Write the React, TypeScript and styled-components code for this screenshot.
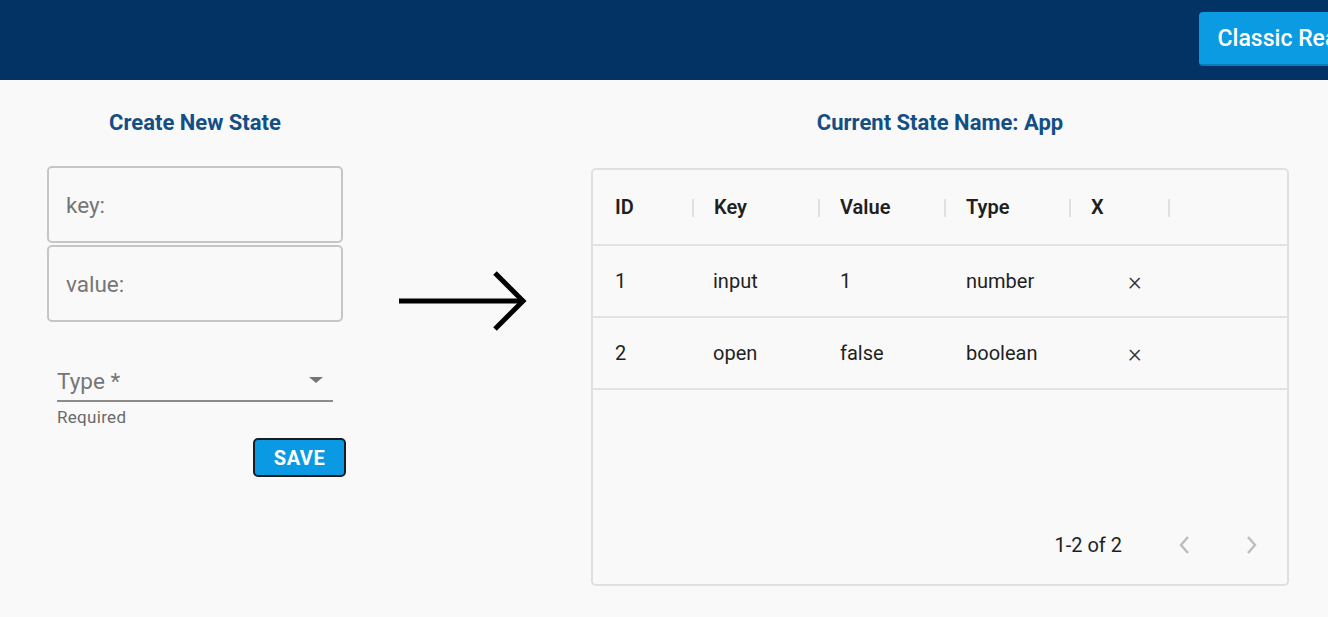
import React from 'react';
import styled, { createGlobalStyle } from 'styled-components';

const GlobalStyle = createGlobalStyle`
  html, body {
    margin: 0;
    padding: 0;
    background: #f9f9f9;
    font-family: Roboto, "Liberation Sans", Arial, sans-serif;
    overflow: hidden;
  }
`;

const Page = styled.div`
  width: 1328px;
  height: 617px;
  background: #f9f9f9;
  overflow: hidden;
`;

const TopBar = styled.header`
  height: 80px;
  background: #023364;
  display: flex;
  align-items: flex-start;
  justify-content: flex-end;
  padding-top: 12px;
  box-sizing: border-box;
  overflow: hidden;
`;

const NavButton = styled.button`
  height: 54px;
  margin-right: -48px;
  padding: 0 19px;
  border: none;
  border-bottom: 2px solid #0b7bc0;
  border-radius: 4px;
  background: #0a9be3;
  color: #fff;
  font-family: Roboto, "Liberation Sans", sans-serif;
  font-size: 23px;
  font-weight: 500;
  white-space: nowrap;
`;

const Main = styled.main`
  display: flex;
  padding: 29px 0 0 47px;
`;

const Column = styled.section<{ $width: number }>`
  width: ${(p) => p.$width}px;
  display: flex;
  flex-direction: column;
`;

const Title = styled.h2`
  margin: 0;
  height: 28px;
  line-height: 28px;
  text-align: center;
  color: #124f86;
  font-size: 22px;
  font-weight: 700;
`;

const TextBox = styled.input`
  box-sizing: border-box;
  width: 296px;
  height: 77px;
  margin: 0;
  padding: 0 17px;
  border: 2px solid #c6c6c6;
  border-radius: 5px;
  background: transparent;
  font-family: Roboto, "Liberation Sans", sans-serif;
  font-size: 22.5px;
  color: #333;
  outline: none;

  &::placeholder {
    color: #767676;
  }
`;

const Fields = styled.div`
  display: flex;
  flex-direction: column;
  gap: 2px;
  margin-top: 29px;
`;

const SelectField = styled.div`
  margin: 42px 0 0 10px;
  width: 276px;
`;

const SelectInput = styled.div`
  height: 38px;
  display: flex;
  align-items: center;
  justify-content: space-between;
  border-bottom: 2px solid #8c8c8c;
  box-sizing: border-box;
  padding: 0 10px 2px 0;
  font-size: 22.5px;
  color: #767676;
`;

const Caret = styled.span`
  width: 0;
  height: 0;
  margin-top: -2px;
  border-left: 7px solid transparent;
  border-right: 7px solid transparent;
  border-top: 6px solid #757575;
`;

const HelperText = styled.div`
  margin-top: 5px;
  font-size: 17px;
  color: #6a6a6a;
  letter-spacing: 0.3px;
`;

const Actions = styled.div`
  display: flex;
  justify-content: flex-end;
  margin-top: 11px;
  margin-right: -3px;
`;

const SaveButton = styled.button`
  width: 93px;
  height: 39px;
  border: 2px solid #1c1c1c;
  border-radius: 5px;
  background: #0a9ae4;
  color: #fff;
  font-family: Roboto, "Liberation Sans", sans-serif;
  font-size: 20px;
  font-weight: 700;
  letter-spacing: 0.5px;
`;

const ArrowSlot = styled.div`
  width: 248px;
  padding: 161px 0 0 56px;
  box-sizing: border-box;
`;

const Grid = styled.div`
  margin-top: 31px;
  height: 418px;
  box-sizing: border-box;
  border: 2px solid #e0e0e0;
  border-radius: 5px;
  display: flex;
  flex-direction: column;
`;

const GridRow = styled.div<{ $head?: boolean }>`
  display: grid;
  grid-template-columns: 100px 126px 126px 125px 99px 1fr;
  box-sizing: border-box;
  height: ${(p) => (p.$head ? 76 : 72)}px;
  border-bottom: 2px solid #e2e2e2;
  align-items: center;
  font-size: 20px;
  color: #1f1f1f;
  font-weight: ${(p) => (p.$head ? 600 : 400)};
`;

const Cell = styled.div<{ $sep?: boolean; $inset?: number }>`
  position: relative;
  padding-left: ${(p) => p.$inset ?? 21}px;
  height: 100%;
  display: flex;
  align-items: center;

  ${(p) =>
    p.$sep &&
    `&::after {
      content: '';
      position: absolute;
      right: -1px;
      top: 50%;
      width: 2px;
      height: 18px;
      margin-top: -8px;
      background: #e0e0e0;
    }`}
`;

const RemoveMark = styled.span`
  margin-left: 37px;
  font-size: 26px;
  font-weight: 300;
  color: #333;
`;

const GridFooter = styled.div`
  margin-top: auto;
  height: 78px;
  display: flex;
  align-items: center;
  justify-content: flex-end;
  padding-right: 15px;
  font-size: 20px;
  color: #1f1f1f;
`;

const PageButton = styled.button<{ $gap: number }>`
  width: 40px;
  height: 40px;
  border: none;
  background: none;
  padding: 0;
  display: flex;
  align-items: center;
  justify-content: center;
  margin-left: ${(p) => p.$gap}px;
`;

const Arrow = () => (
  <svg width="130" height="64" viewBox="0 0 130 64">
    <line x1="0" y1="31" x2="124" y2="31" stroke="#000" strokeWidth="5" />
    <polyline points="96,3 124,31 96,59" fill="none" stroke="#000" strokeWidth="5" />
  </svg>
);

const Chevron = ({ dir }: { dir: 'left' | 'right' }) => (
  <svg width="12" height="20" viewBox="0 0 12 20">
    <polyline
      points={dir === 'left' ? '10,2 3,10 10,18' : '2,2 9,10 2,18'}
      fill="none"
      stroke="#bdbdbd"
      strokeWidth="2.4"
    />
  </svg>
);

const rows = [
  { id: 1, key: 'input', value: '1', type: 'number' },
  { id: 2, key: 'open', value: 'false', type: 'boolean' },
];

export default function App() {
  return (
    <Page>
      <GlobalStyle />
      <TopBar>
        <NavButton>Classic React</NavButton>
      </TopBar>
      <Main>
        <Column $width={296}>
          <Title>Create New State</Title>
          <Fields>
            <TextBox placeholder="key:" />
            <TextBox placeholder="value:" />
          </Fields>
          <SelectField>
            <SelectInput>
              <span>Type *</span>
              <Caret />
            </SelectInput>
            <HelperText>Required</HelperText>
          </SelectField>
          <Actions>
            <SaveButton>SAVE</SaveButton>
          </Actions>
        </Column>
        <ArrowSlot>
          <Arrow />
        </ArrowSlot>
        <Column $width={698}>
          <Title>Current State Name: App</Title>
          <Grid>
            <GridRow $head>
              <Cell $sep $inset={22}>ID</Cell>
              <Cell $sep>Key</Cell>
              <Cell $sep>Value</Cell>
              <Cell $sep>Type</Cell>
              <Cell $sep>X</Cell>
              <Cell />
            </GridRow>
            {rows.map((r) => (
              <GridRow key={r.id}>
                <Cell $inset={22}>{r.id}</Cell>
                <Cell $inset={20}>{r.key}</Cell>
                <Cell $inset={21}>{r.value}</Cell>
                <Cell $inset={21}>{r.type}</Cell>
                <Cell $inset={21}>
                  <RemoveMark>×</RemoveMark>
                </Cell>
                <Cell />
              </GridRow>
            ))}
            <GridFooter>
              <span>1-2 of 2</span>
              <PageButton $gap={42} aria-label="previous page">
                <Chevron dir="left" />
              </PageButton>
              <PageButton $gap={28} aria-label="next page">
                <Chevron dir="right" />
              </PageButton>
            </GridFooter>
          </Grid>
        </Column>
      </Main>
    </Page>
  );
}
